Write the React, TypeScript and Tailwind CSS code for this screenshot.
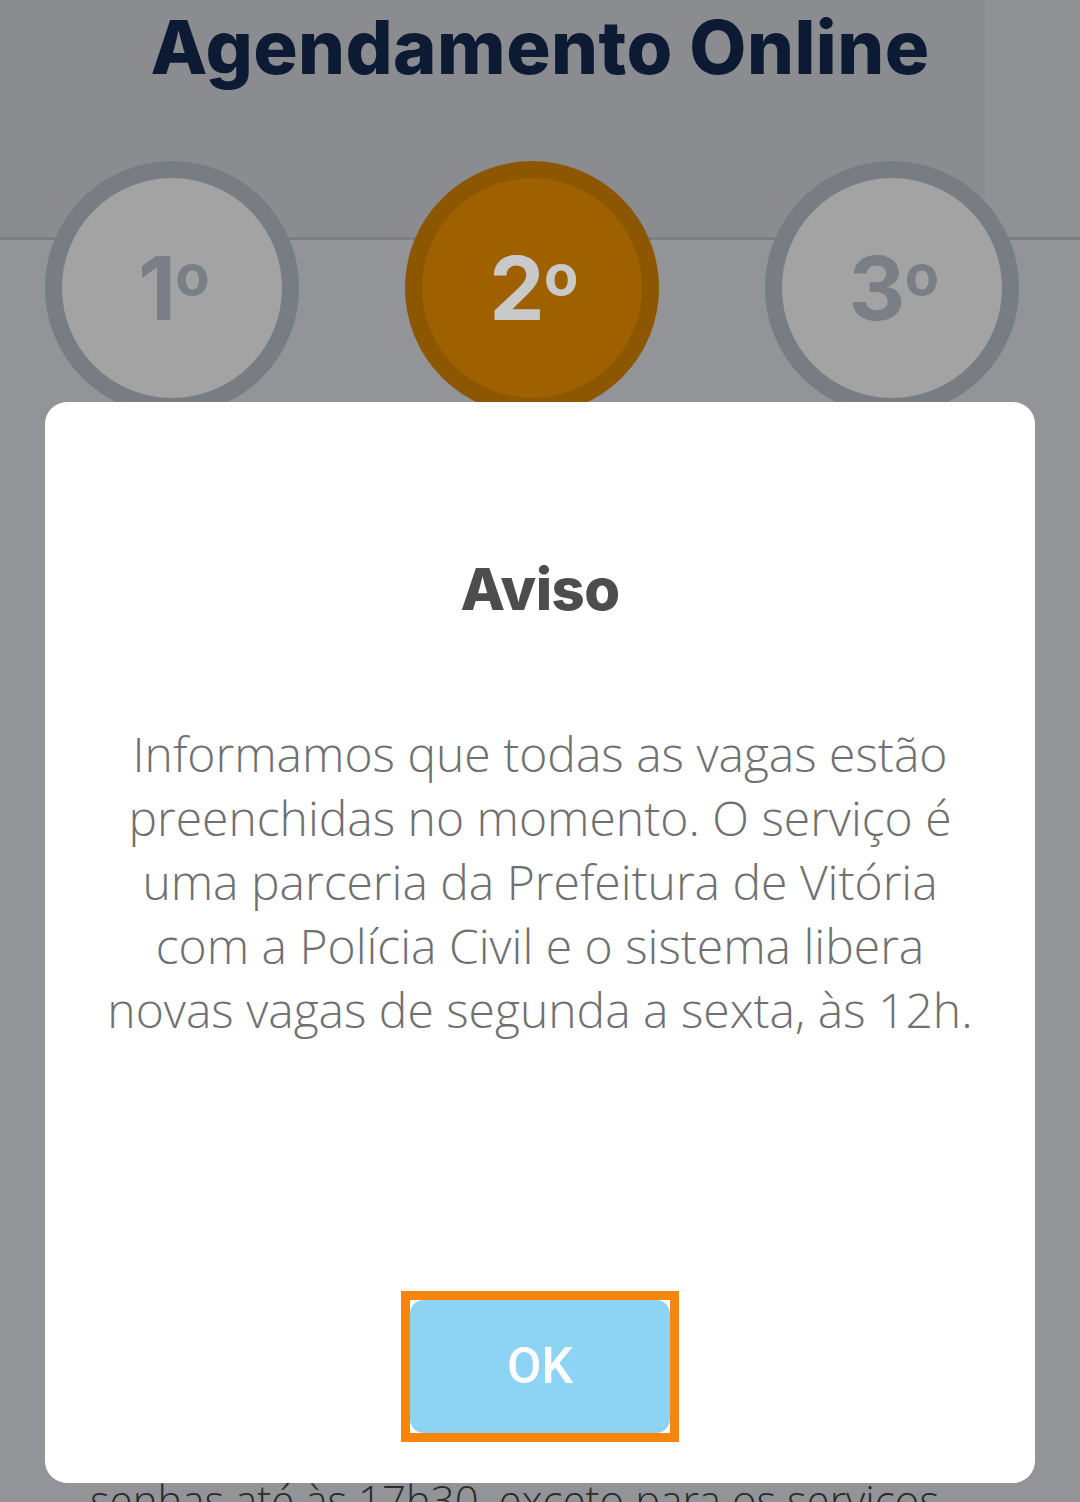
export default function App() {
  const steps = [
    { n: '1', active: false },
    { n: '2', active: true },
    { n: '3', active: false },
  ];

  return (
    <div className="relative h-[1502px] w-[1080px] overflow-hidden bg-[#939498]">
      {/* page behind the dialog */}
      <header className="h-[240px] border-b-[3px] border-[#7b7d82] bg-[linear-gradient(to_right,#8b8c90_985px,#909195_985px)] pt-[10px]">
        <h1 className="text-center font-['Inter',sans-serif] text-[74px] font-extrabold leading-none tracking-[0.006em] text-[#0d1a33]">
          Agendamento Online
        </h1>
      </header>

      <div className="-mt-[79px] flex gap-[106px] pl-[45px]">
        {steps.map((s) => (
          <div
            key={s.n}
            className={
              s.active
                ? 'flex h-[254px] w-[254px] items-center justify-center rounded-full border-[17px] border-[#8c5700] bg-[#9f6100]'
                : 'flex h-[254px] w-[254px] items-center justify-center rounded-full border-[17px] border-[#787c83] bg-[#a3a3a3]'
            }
          >
            <span
              className={
                s.active
                  ? "flex items-start font-['Inter',sans-serif] text-[88px] font-bold leading-none tracking-[-0.04em] text-[#c9c9c9]"
                  : "flex items-start font-['Inter',sans-serif] text-[88px] font-bold leading-none tracking-[-0.04em] text-[#7a7e85]"
              }
            >
              {s.n}
              <span className="ml-[3px] mt-[3px] text-[56px] leading-none">o</span>
            </span>
          </div>
        ))}
      </div>

      <p className="mt-[1053px] pl-[90px] font-['Open_Sans',sans-serif] text-[42px] font-light text-[#2c2c2c]">
        senhas até às 17h30, exceto para os serviços
      </p>

      {/* dialog */}
      <div className="absolute left-[45px] top-[402px] flex h-[1081px] w-[990px] flex-col items-center rounded-[22px] bg-white pt-[158px]">
        <h2 className="font-['Inter',sans-serif] text-[58px] font-extrabold leading-none tracking-[-0.01em] text-[#4d4d4d]">
          Aviso
        </h2>
        <p className="mt-[104px] text-center font-['Open_Sans',sans-serif] text-[48px] font-light leading-[64px] text-[#707070]">
          <span className="block">Informamos que todas as vagas estão</span>
          <span className="block">preenchidas no momento. O serviço é</span>
          <span className="block">uma parceria da Prefeitura de Vitória</span>
          <span className="block">com a Polícia Civil e o sistema libera</span>
          <span className="block">novas vagas de segunda a sexta, às 12h.</span>
        </p>
        <div className="mb-[41px] mt-auto border-[9px] border-[#f5850d]">
          <button className="flex h-[133px] w-[260px] items-center justify-center rounded-[14px] bg-[#8cd3f4] font-['Roboto',sans-serif] text-[50px] font-medium text-white">
            OK
          </button>
        </div>
      </div>
    </div>
  );
}
